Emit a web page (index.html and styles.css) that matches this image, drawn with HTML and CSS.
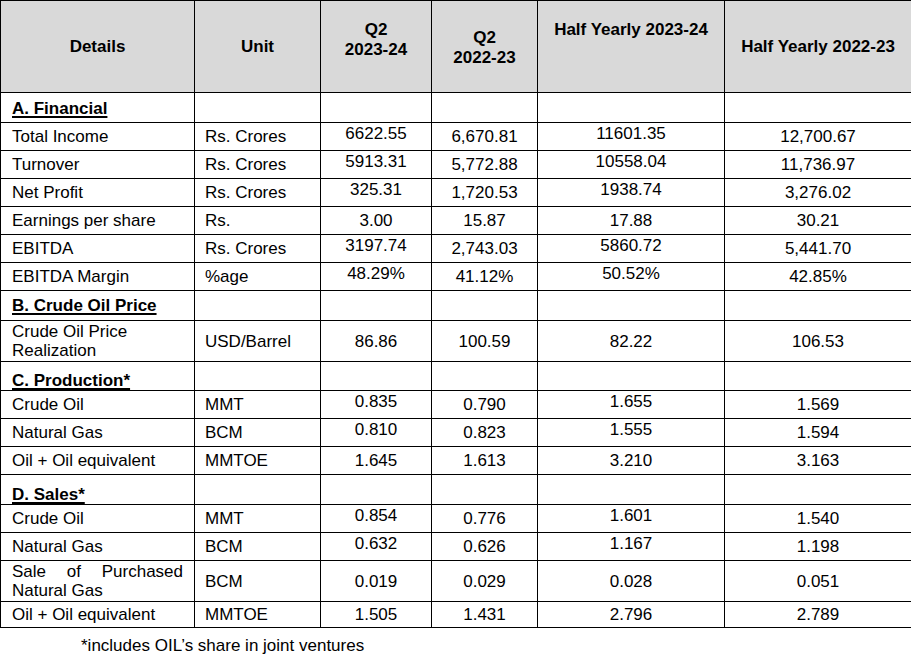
FILE: index.html
```html
<!DOCTYPE html>
<html>
<head>
<meta charset="utf-8">
<link rel="stylesheet" href="styles.css">
</head>
<body>
<table class="results">
  <colgroup>
    <col class="c1"><col class="c2"><col class="c3"><col class="c4"><col class="c5"><col class="c6">
  </colgroup>
  <thead>
    <tr class="head">
      <th>Details</th>
      <th>Unit</th>
      <th class="top">Q2<br>2023-24</th>
      <th class="low">Q2<br>2022-23</th>
      <th class="top">Half Yearly 2023-24</th>
      <th>Half Yearly 2022-23</th>
    </tr>
  </thead>
  <tbody>
    <tr class="sec"><td class="label bottom sec-a"><span class="sh">A. Financial</span></td><td></td><td></td><td></td><td></td><td></td></tr>
    <tr class="row"><td class="label">Total Income</td><td class="unit">Rs. Crores</td><td class="up">6622.55</td><td>6,670.81</td><td class="up">11601.35</td><td>12,700.67</td></tr>
    <tr class="row"><td class="label">Turnover</td><td class="unit">Rs. Crores</td><td class="up">5913.31</td><td>5,772.88</td><td class="up">10558.04</td><td>11,736.97</td></tr>
    <tr class="row"><td class="label">Net Profit</td><td class="unit">Rs. Crores</td><td class="up">325.31</td><td>1,720.53</td><td class="up">1938.74</td><td>3,276.02</td></tr>
    <tr class="row"><td class="label">Earnings per share</td><td class="unit">Rs.</td><td>3.00</td><td>15.87</td><td>17.88</td><td>30.21</td></tr>
    <tr class="row"><td class="label">EBITDA</td><td class="unit">Rs. Crores</td><td class="up">3197.74</td><td>2,743.03</td><td class="up">5860.72</td><td>5,441.70</td></tr>
    <tr class="row"><td class="label">EBITDA Margin</td><td class="unit">%age</td><td class="up">48.29%</td><td>41.12%</td><td class="up">50.52%</td><td>42.85%</td></tr>
    <tr class="sec"><td class="label"><span class="sh">B. Crude Oil Price</span></td><td></td><td></td><td></td><td></td><td></td></tr>
    <tr class="row tall"><td class="label">Crude Oil Price Realization</td><td class="unit">USD/Barrel</td><td>86.86</td><td>100.59</td><td>82.22</td><td>106.53</td></tr>
    <tr class="sec sec-c"><td class="label bottom low-text"><span class="sh">C. Production*</span></td><td></td><td></td><td></td><td></td><td></td></tr>
    <tr class="row"><td class="label">Crude Oil</td><td class="unit">MMT</td><td class="up">0.835</td><td>0.790</td><td class="up">1.655</td><td>1.569</td></tr>
    <tr class="row"><td class="label">Natural Gas</td><td class="unit">BCM</td><td class="up">0.810</td><td>0.823</td><td class="up">1.555</td><td>1.594</td></tr>
    <tr class="row"><td class="label">Oil + Oil equivalent</td><td class="unit">MMTOE</td><td>1.645</td><td>1.613</td><td>3.210</td><td>3.163</td></tr>
    <tr class="sec"><td class="label bottom low-text"><span class="sh">D. Sales*</span></td><td></td><td></td><td></td><td></td><td></td></tr>
    <tr class="row"><td class="label">Crude Oil</td><td class="unit">MMT</td><td class="up">0.854</td><td>0.776</td><td class="up">1.601</td><td>1.540</td></tr>
    <tr class="row"><td class="label">Natural Gas</td><td class="unit">BCM</td><td class="up">0.632</td><td>0.626</td><td class="up">1.167</td><td>1.198</td></tr>
    <tr class="row tall"><td class="label justify">Sale of Purchased Natural Gas</td><td class="unit">BCM</td><td>0.019</td><td>0.029</td><td>0.028</td><td>0.051</td></tr>
    <tr class="row last"><td class="label">Oil + Oil equivalent</td><td class="unit">MMTOE</td><td>1.505</td><td>1.431</td><td>2.796</td><td>2.789</td></tr>
  </tbody>
</table>
<p class="note">*includes OIL’s share in joint ventures</p>
</body>
</html>
```

FILE: styles.css
```css
html, body {
  margin: 0;
  padding: 0;
  background: #ffffff;
}

body {
  font-family: "Liberation Sans", Arial, sans-serif;
  font-size: 17px;
  color: #000000;
}

.results {
  border-collapse: collapse;
  table-layout: fixed;
  width: 911px;
}

.c1 { width: 194px; }
.c2 { width: 126px; }
.c3 { width: 111px; }
.c4 { width: 106px; }
.c5 { width: 187px; }
.c6 { width: 187px; }

.results th,
.results td {
  border: 1px solid #000;
  padding: 0 4px;
  line-height: 19px;
  text-align: center;
  vertical-align: middle;
  overflow: hidden;
}

.head {
  height: 92px;
}

.head th {
  background: #d9d9d9;
  font-weight: bold;
  line-height: 20px;
}

.head th.top {
  vertical-align: top;
  padding-top: 19px;
}

.head th.low {
  padding-top: 2px;
}

.results td.label {
  text-align: left;
  padding-left: 11px;
  padding-right: 11px;
}

.results td.unit {
  text-align: left;
  padding-left: 10px;
}

.results td.justify {
  text-align: justify;
}

.results td.up {
  padding-bottom: 7px;
}

.row {
  height: 28px;
}

.row.tall {
  height: 41px;
}

.row.last {
  height: 26px;
}

.sec {
  height: 30px;
}

.sec-c {
  height: 29px;
}

.results td.bottom {
  vertical-align: bottom;
  padding-bottom: 2px;
}

.results td.sec-a {
  padding-bottom: 4px;
}

.results td.low-text {
  padding-bottom: 0;
}

.sh {
  font-weight: bold;
  text-decoration: underline;
  text-decoration-thickness: 2px;
  text-underline-offset: 2px;
}

.note {
  margin: 8px 0 0 81px;
  line-height: 20px;
}
```
